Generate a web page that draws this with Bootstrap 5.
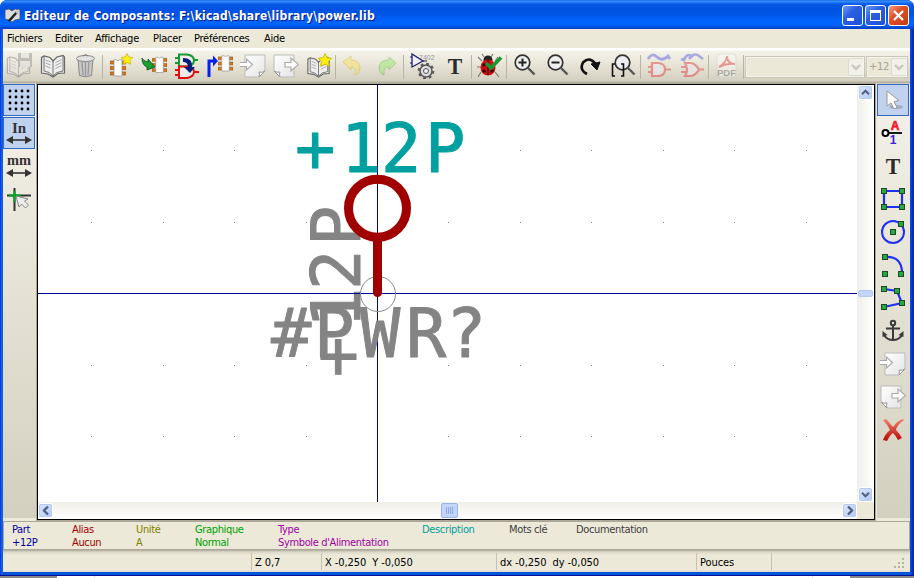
<!DOCTYPE html>
<html lang="fr">
<head>
<meta charset="utf-8">
<title>Editeur de Composants</title>
<link href="https://cdn.jsdelivr.net/npm/bootstrap@5.3.0/dist/css/bootstrap.min.css" rel="stylesheet">
<style>
body{width:914px;height:578px;overflow:hidden;background:#fff;font:11px/13px "DejaVu Sans Condensed","DejaVu Sans",sans-serif;letter-spacing:-.25px;color:#000}
svg{display:block;flex:none}
.win{height:576px;padding:0 4px 4px 3px;background:linear-gradient(90deg,#0831d9 0,#166aee 2px,#0855dd 3px,#0855dd 910px,#0045e0 911px,#001ea0 914px);border-radius:7px 7px 0 0;border-bottom:1px solid #00138c}
.titlebar{height:29px;margin:0 -4px 0 -3px;padding:2px 5px 0 5px;border-radius:7px 7px 0 0;background:linear-gradient(#0a5bd8 0,#3b94ff 1px,#2a80f5 2px,#0a5be6 4px,#0053e1 8px,#0055e5 14px,#0062fa 20px,#0066ff 25px,#0050d8 27px,#003dc8 29px)}
.caption{font:bold 12px/18px "DejaVu Sans Condensed","DejaVu Sans",sans-serif;letter-spacing:.23px;color:#fff;text-shadow:1px 1px 0 #0a1883}
.cap-btn{width:21px;height:21px;border:1px solid #fff;border-radius:3px;background:linear-gradient(135deg,#6f9cf5,#2a5fe0 40%,#1f4fd8)}
.cap-close{background:linear-gradient(135deg,#f0a088,#e0502a 40%,#c43a12)}
.menus{height:19px;background:#ece9d8;padding:3px 0 0 4px}
.tools{height:36px;background:linear-gradient(#fff 0,#fff 2px,#f5f3ea 3px,#e8e5d8 16px,#d4d0c0 33px,#b4b09f 34px,#b4b09f 35px,#ece9d8 36px)}
.tool{width:33px;height:32px;display:flex;align-items:center;justify-content:center;flex:none}
.sep{width:2px;height:24px;border-left:1px solid #b8b4a4;flex:none;margin-top:1px}
.off{opacity:.38}
.combo{height:22px;border:1px solid #c9c7ba;outline:1px solid #f6f4ea;outline-offset:-2px;background:#ebe8d8;color:#a5a290;margin-top:1px;overflow:hidden}
.combo-b{width:16px;height:18px;border-radius:2px;border:1px solid #dddbcf;background:#f2f1e9;flex:none}
.main{height:437px;background:#ece9d8}
.side{background:linear-gradient(#f4f2e9,#d4d0c0);height:434px}
.side-l{width:33px}.side-r{width:33px}
.side .tool{width:32px;height:32px;margin-bottom:1px}
.side .sel{background:#c1d2ee;border:1px solid #316ac5}
.frame{width:838px;height:436px;border:1px solid #000;outline:1px solid #aca899;margin:0 2px 0 1px;background:#fff}
.vsb{width:17px;background:linear-gradient(90deg,#f0efe8,#fff)}
.hsb{height:17px;background:linear-gradient(#f0efe8,#fff)}
.sb{width:15px;height:15px;flex:none;border:1px solid #fff;outline:1px solid #b9cbf0;outline-offset:-2px;border-radius:3px;background:linear-gradient(135deg,#dbe6fe,#b4c8f8)}
.thumb-h{width:17px;height:15px;border:1px solid #98b4e8;border-radius:2px;background:#c4d5fc}
.thumb-v{width:15px;height:7px;border:1px solid #b4c8f0;border-radius:2px;background:#c4d5fc}
.msg{height:29px;background:#ece9d8;border:1px solid #aca899;padding:1px 0 0 8px;letter-spacing:-.35px}
.status{height:22px;background:linear-gradient(#aca899 0,#dcd8c8 2px,#ece9d8 5px,#ece9d8 20px,#ddd9c8);letter-spacing:-.08px}
.pane{height:17px;margin-top:3px;padding:3px 0 0 3px;border-left:1px solid #c5c2b2;white-space:pre}
.under{height:2px;background:linear-gradient(90deg,#888 57px,#fff 57px,#fff 94px,#bbb 94px,#fff 95px,#fff 812px,#bbb 812px,#fff 813px,#fff 850px,#888 850px)}
.w-a{width:60px}.w-b{width:64px}.w-c{width:59px}.w-d{width:83px}.w-e{width:144px}.w-f{width:87px}.w-g{width:67px}
.m1{width:48px}.m2{width:40px}.m3{width:58px}.m4{width:41px}.m5{width:70px}
.p0{width:248px;border:0}.p1{width:70px}.p2{width:175px}.p3{width:200px}.p4{width:75px}.p5{width:122px}
.stroke-font{font-family:"DejaVu Sans Mono",monospace;font-size:67px;letter-spacing:0;stroke-width:1px;stroke-linejoin:round}
.serif{font-family:"Liberation Serif",serif;font-weight:bold;letter-spacing:0}
.sans{font-family:"Liberation Sans",sans-serif;letter-spacing:0}
</style>
<script src="https://cdn.jsdelivr.net/npm/bootstrap@5.3.0/dist/js/bootstrap.bundle.min.js"></script>
</head>
<body>
<svg width="0" height="0" class="position-absolute">
<defs>
<linearGradient id="pg" x1="0" y1="0" x2="1" y2="1"><stop offset="0" stop-color="#fff"/><stop offset="1" stop-color="#e4e4e4"/></linearGradient>
<linearGradient id="rg" x1="0" y1="0" x2="0" y2="1"><stop offset="0" stop-color="#f0806c"/><stop offset="1" stop-color="#b80808"/></linearGradient>
<symbol id="book" viewBox="0 0 26 26"><path d="M1.500 4.500 4 3 10 4.500 13 8 17 4 23 2.500 24.500 4V20L18 20.500 13 24 8 21 1.500 20z" fill="#eee" stroke="#666" stroke-width="1.200"/><path d="M13 8v15M4 3v15l5 1.500 4 3.500 4-3.500 6-1.500V3" fill="none" stroke="#666" stroke-width=".9"/><path d="M5.500 7l5 2M5.500 10l5 2M5.500 13l5 2M21.500 6.500l-6 3M21.500 9.500l-6 3M21.500 12.500l-6 3" stroke="#aaa"/></symbol>
<symbol id="star" viewBox="0 0 12 12"><path d="M6 .5 7.800 4 11.700 4.500 9 7.300 9.700 11.300 6 9.500 2.200 11.300 3 7.300 .3 4.500 4.200 4z" fill="#ffee10" stroke="#c9b400" stroke-width=".7"/></symbol>
<symbol id="chip" viewBox="0 0 16 18"><path d="M0 2h4v3H0zM0 7.500h4v3H0zM0 13h4v3H0zM12 2h4v3h-4zM12 7.500h4v3h-4zM12 13h4v3h-4z" fill="#e07818" stroke="#8a4a10" stroke-width=".6"/><path d="M4 .8h2.500Q8 3 9.500.8H12V17H4z" fill="#fff" stroke="#999" stroke-width=".8"/></symbol>
<symbol id="import" viewBox="0 0 26 26"><path d="M5 2h20v16l-6 6H5z" fill="url(#pg)" stroke="#bbb"/><path d="M25 18l-6 6q1-3 0-5 3 1 6-1z" fill="#fff" stroke="#999"/><path d="M0 9.500h6.500V6l6 5.500-6 5.500v-3.500H0" fill="#fff" stroke="#aaa" stroke-width="1.200"/></symbol>
<symbol id="export" viewBox="0 0 26 26"><path d="M1 2h20v22H7l-6-6z" fill="url(#pg)" stroke="#bbb"/><path d="M1 18l6 6q-1-3 0-5-3 1-6-1z" fill="#fff" stroke="#999"/><path d="M12 9.500h6V5l7.500 6.500L18 18v-4h-6z" fill="#fff" stroke="#aaa" stroke-width="1.200"/></symbol>
<symbol id="bigt" viewBox="0 0 26 26"><text x="13" y="21" text-anchor="middle" font-size="24" textLength="14.500" lengthAdjust="spacingAndGlyphs" class="serif" fill="#2a2a2a">T</text></symbol>
<symbol id="lens" viewBox="0 0 26 26"><circle cx="10.500" cy="9.500" r="7.300" fill="#eee" stroke="#333" stroke-width="1.700"/><path d="M15.500 14.500l7 7" stroke="#555" stroke-width="2.400"/></symbol>
<symbol id="gate" viewBox="0 0 26 26"><path d="M2 6Q6-1 11 4t11-1l2 3" fill="none" stroke="#3a3ae0" stroke-width="2.800"/><path d="M2 14h4M2 19h4M19 16.500h6" stroke="#e01818" stroke-width="2"/><path d="M6 10h7q6 1 6 6.500T13 23H6z" fill="#eeeeff" stroke="#e01818" stroke-width="2.200"/></symbol>
<symbol id="gate2" viewBox="0 0 26 26"><path d="M2 6l3 1Q8-1 14 4M10 6Q15-1 20 3l4 3" fill="none" stroke="#3a3ae0" stroke-width="2.600"/><path d="M2 14h5M2 19h5M20 16.500h5" stroke="#e01818" stroke-width="2"/><path d="M6 10h6q5 1 8 6.500Q17 22 12 23H6q4-6 0-13z" fill="#eeeeff" stroke="#e01818" stroke-width="2.200"/></symbol>
<symbol id="arrow" viewBox="0 0 26 26"><ellipse cx="16" cy="20" rx="7" ry="2" fill="#8a93a5" opacity=".6"/><path d="M7 4v15l4-3 3 6 3-1.500-3-6 5-1z" fill="#fff" stroke="#999" stroke-width="1"/></symbol>
<symbol id="dim" viewBox="0 0 26 8"><path d="M3 4h20" stroke="#333" stroke-width="1.600"/><path d="M0 4l7-4v8zM26 4l-7-4v8z" fill="#333"/></symbol>
<symbol id="knot" viewBox="0 0 6 6"><rect x=".5" y=".5" width="5" height="5" fill="#28a745" stroke="#1c4a20"/></symbol>
<symbol id="chev" viewBox="0 0 10 8"><path d="M1 2l4 4 4-4" fill="none" stroke="currentColor" stroke-width="2.300"/></symbol>
</defs>
</svg>
<div class="win">
<div class="titlebar d-flex align-items-center">
<svg width="15" height="15" viewBox="0 0 15 15"><path d="M0 2l4-1 3 2 3-2 5 1v9l-5 1-3 2-3-2-4-1z" fill="#ddd" stroke="#555" stroke-width=".8"/><path d="M4 13l8-9" stroke="#222" stroke-width="2.600"/><path d="M11 5l3-3" stroke="#ccc" stroke-width="2"/></svg>
<span class="caption ms-1 flex-grow-1">Editeur de Composants: F:\kicad\share\library\power.lib</span>
<div class="d-flex" style="gap:2px">
<div class="cap-btn"><svg width="19" height="19"><path d="M4 12h7v3H4z" fill="#fff"/></svg></div>
<div class="cap-btn"><svg width="19" height="19"><path d="M4 4h11v11H4zM5 7v7h9V7z" fill="#fff" fill-rule="evenodd"/></svg></div>
<div class="cap-btn cap-close"><svg width="19" height="19"><path d="M5 5l9 9M14 5l-9 9" stroke="#fff" stroke-width="2.300"/></svg></div>
</div>
</div>
<div class="menus d-flex"><span class="m1">Fichiers</span><span class="m2">Editer</span><span class="m3">Affichage</span><span class="m4">Placer</span><span class="m5">Préférences</span><span>Aide</span></div>
<div class="tools d-flex align-items-center">
<div class="tool off"><svg width="28" height="28" viewBox="0 0 28 28"><use href="#book" y="2" width="25" height="25"/><path d="M12 1h14v14H12z" fill="#777"/><path d="M15 1h8v5h-8zM14 9h10v6H14z" fill="#ddd"/></svg></div>
<div class="tool"><svg width="26" height="26"><use href="#book"/></svg></div>
<div class="tool"><svg width="26" height="26"><path d="M5 6l1.500 16.500q6 2.500 12 0L20 6z" fill="#c8c8c8" stroke="#888"/><path d="M9 9l1 13M12.500 9v14M16 9l-1 13" stroke="#999" stroke-width="1.300"/><ellipse cx="12.500" cy="5.500" rx="9" ry="3" fill="#e4e4e4" stroke="#888"/><path d="M10 3q2.500-3 5 0" fill="none" stroke="#777"/></svg></div>
<div class="sep"></div>
<div class="tool"><svg width="26" height="26"><use href="#chip" x="2" y="6" width="16" height="18"/><use href="#star" x="13" y="0" width="12" height="12"/></svg></div>
<div class="tool"><svg width="26" height="26"><use href="#chip" x="11" y="3" width="15" height="18"/><path d="M1 5q1 3 6 4V6l7 8-8 3v-3Q1 12 1 5z" fill="#18a030" stroke="#064a10" stroke-width=".8"/></svg></div>
<div class="tool"><svg width="26" height="26"><path d="M1 5h5M1 10h5M19 7h5" stroke="#189830" stroke-width="1.800"/><path d="M5 1.500h8q7 1 7 6t-7 6H5z" fill="#eee" stroke="#189830" stroke-width="2"/><path d="M1 17h5M1 22h5M19 19h6" stroke="#e01010" stroke-width="1.800"/><path d="M5 13.500h8q7 1 7 5.500t-7 6H5z" fill="#eee" stroke="#e01010" stroke-width="2"/><path d="M9 5q10 0 9 9h3l-5 6-6-6h4q0-5-5-5z" fill="#001c80"/></svg></div>
<div class="tool"><svg width="28" height="28"><use href="#chip" x="12" y="3" width="15" height="17"/><path d="M3 25V9h6" fill="none" stroke="#0820e8" stroke-width="3"/><path d="M7 3.500l5 5.500-5 5.500z" fill="#0820e8"/></svg></div>
<div class="tool"><svg width="26" height="26"><use href="#import"/></svg></div>
<div class="tool"><svg width="26" height="26"><use href="#export"/></svg></div>
<div class="tool"><svg width="26" height="26"><use href="#book" y="2" width="25" height="24"/><use href="#star" x="12" width="14" height="14"/></svg></div>
<div class="sep"></div>
<div class="tool off"><svg width="26" height="26"><path d="M2 9l8-6v4q9 0 9 8-1 6-5 7 2-8-4-8v3z" fill="#ffe040" stroke="#d8b000"/></svg></div>
<div class="tool off"><svg width="26" height="26"><path d="M22 10l-7-6v3Q5 7 5 15q1 6 5 7-1-8 5-8v3z" fill="#80e850" stroke="#48a828"/></svg></div>
<div class="sep"></div>
<div class="tool"><svg width="26" height="26"><text x="10" y="7" font-size="7" class="sans" fill="#999">7402</text><path d="M1 4h4M1 10h4M14 8h4" stroke="#223"/><path d="M3 1v13l11-6z" fill="#eef" stroke="#202070" stroke-width="1.300"/><circle cx="17" cy="18" r="6" fill="#ddd" stroke="#555" stroke-width="1.500"/><circle cx="17" cy="18" r="7.300" fill="none" stroke="#555" stroke-width="2" stroke-dasharray="2.800 2.930"/><circle cx="17" cy="18" r="2.500" fill="#eee" stroke="#555"/></svg></div>
<div class="tool"><svg width="26" height="26"><use href="#bigt"/></svg></div>
<div class="sep"></div>
<div class="tool"><svg width="26" height="26"><path d="M5 8L1 4M18 8l3-4M4 14H0M4 19l-3 5M18 19l4 5M7 4L5 1M14 4l2-3" stroke="#777" stroke-width="1.100"/><circle cx="11" cy="7" r="4.500" fill="#222"/><ellipse cx="11" cy="14.500" rx="7.500" ry="8" fill="#d01010"/><path d="M11 7v15" stroke="#400" stroke-width="1.300"/><g fill="#300"><circle cx="7" cy="12" r="1.700"/><circle cx="7" cy="18" r="1.700"/><circle cx="15" cy="18" r="1.700"/></g><path d="M9 10l5 5L24 4.500" fill="none" stroke="#189830" stroke-width="3.500"/></svg></div>
<div class="sep"></div>
<div class="tool"><svg width="26" height="26"><use href="#lens"/><path d="M6.500 9.500h8M10.500 5.500v8" stroke="#222" stroke-width="2"/></svg></div>
<div class="tool"><svg width="26" height="26"><use href="#lens"/><path d="M6.500 9.500h8" stroke="#222" stroke-width="2"/></svg></div>
<div class="tool"><svg width="26" height="26"><path d="M9 21Q1 17 5 9.500q7-7 13 2.500" fill="none" stroke="#111" stroke-width="2.600"/><path d="M13 11l9-2-3 8z" fill="#111" stroke="#111"/></svg></div>
<div class="tool"><svg width="26" height="26"><use href="#lens" x="1"/><path d="M4 11H1.500v12H4M10 11h2.500v12H10" fill="none" stroke="#111" stroke-width="1.600"/></svg></div>
<div class="sep"></div>
<div class="tool off"><svg width="26" height="26"><use href="#gate"/></svg></div>
<div class="tool off"><svg width="26" height="26"><use href="#gate2"/></svg></div>
<div class="sep"></div>
<div class="tool off"><svg width="24" height="26"><rect x="2" y="1" width="19" height="23" rx="3" fill="#fff" stroke="#ccc"/><path d="M4 14Q12 9 12 3q0 8 8 8-8-1-16 3z" fill="none" stroke="#e02020" stroke-width="2"/><text x="11.500" y="23" text-anchor="middle" font-size="9.500" font-weight="bold" class="sans" fill="#555">PDF</text></svg></div>
<div class="sep"></div>
<div class="combo d-flex justify-content-end align-items-center" style="width:120px;margin-right:1px"><div class="combo-b d-flex align-items-center justify-content-center"><svg width="10" height="8" color="#c9c7ba"><use href="#chev"/></svg></div></div>
<div class="combo d-flex justify-content-between align-items-center" style="width:42px;padding-left:2px"><span>+12</span><div class="combo-b d-flex align-items-center justify-content-center"><svg width="10" height="8" color="#c9c7ba"><use href="#chev"/></svg></div></div>
</div>
<div class="main d-flex">
<div class="side side-l">
<div class="tool sel"><svg width="24" height="24"><g stroke="#000" stroke-width="2.800" stroke-linecap="round" stroke-dasharray="0 6"><path d="M3 3h19M3 9h19M3 15h19M3 21h19"/></g></svg></div>
<div class="tool sel"><svg width="26" height="28"><text x="13" y="14" text-anchor="middle" font-size="15" class="serif" fill="#333">In</text><use href="#dim" y="17" width="26" height="8"/></svg></div>
<div class="tool"><svg width="26" height="28"><text x="13" y="13" text-anchor="middle" font-size="15" textLength="24" lengthAdjust="spacingAndGlyphs" class="serif" fill="#333">mm</text><use href="#dim" y="17" width="26" height="8"/></svg></div>
<div class="tool"><svg width="28" height="28"><path d="M2 10.500h24M9.500 3v23" stroke="#333" stroke-width="2"/><path d="M4 10.500h12M9.500 6v11" stroke="#00a820" stroke-width="2.200"/><path d="M11 11l3 11 2.500-3 4 4 3-3-4-4 3.500-2z" fill="#eee" stroke="#888"/></svg></div>
</div>
<div class="frame d-flex flex-column">
<div class="d-flex">
<svg width="819" height="417" viewBox="38 85 819 417">
<g fill="#848484" stroke="#848484">
<text class="stroke-font" transform="translate(360 0) rotate(-90)" y="0" x="-377 -328 -290 -246">+12P</text>
</g>
<path d="M38 293.500h820M377.500 85v418" stroke="#0000a0" shape-rendering="crispEdges"/>
<g fill="#848484" stroke="#848484">
<text class="stroke-font" y="357" x="271 314 360 406 446">#PWR?</text>
</g>
<text class="stroke-font" fill="#00a0a0" stroke="#00a0a0" y="171.500" x="295 341 381 425">+12P</text>
<g stroke="#888" stroke-dasharray="1 70.500" shape-rendering="crispEdges"><path d="M91 150.500h200M448 150.500h400M91 222.500h250M448 222.500h400M91 365.500h250M448 365.500h400M91 436.500h250M448 436.500h400"/></g>
<circle cx="378" cy="294" r="17.500" fill="none" stroke="#888"/>
<circle cx="377.500" cy="208.300" r="29" fill="none" stroke="#a00000" stroke-width="9"/>
<path d="M377.500 240v52.500" stroke="#a00000" stroke-width="9" stroke-linecap="round"/>
</svg>
<div class="vsb d-flex flex-column justify-content-between align-items-center">
<div class="sb d-flex align-items-center justify-content-center"><svg width="9" height="7" color="#4d6185"><g transform="rotate(180 4.500 3.500)"><use href="#chev"/></g></svg></div>
<div class="thumb-v"></div>
<div class="sb d-flex align-items-center justify-content-center"><svg width="9" height="7" color="#4d6185"><use href="#chev"/></svg></div>
</div>
</div>
<div class="d-flex">
<div class="hsb d-flex justify-content-between align-items-center" style="width:819px">
<div class="sb d-flex align-items-center justify-content-center"><svg width="8" height="9"><path d="M6 0.500l-4 4 4 4" fill="none" stroke="#4d6185" stroke-width="2.300"/></svg></div>
<div class="thumb-h d-flex align-items-center justify-content-center ms-1"><svg width="9" height="7"><path d="M1.500 0v7M3.500 0v7M5.500 0v7M7.500 0v7" stroke="#8ca8e0"/></svg></div>
<div class="sb d-flex align-items-center justify-content-center"><svg width="8" height="9"><path d="M2 .5l4 4-4 4" fill="none" stroke="#4d6185" stroke-width="2.300"/></svg></div>
</div>
<div style="width:17px;background:#ece9d8"></div>
</div>
</div>
<div class="side side-r">
<div class="tool sel"><svg width="26" height="26"><use href="#arrow"/></svg></div>
<div class="tool"><svg width="26" height="28"><circle cx="5.500" cy="14" r="3" fill="#fff" stroke="#000" stroke-width="2"/><path d="M9 14h13" stroke="#000" stroke-width="1.800"/><text x="15" y="11" text-anchor="middle" font-size="12" font-weight="bold" class="sans" fill="#f01830" stroke="#f01830" stroke-width=".6">A</text><text x="13" y="25" text-anchor="middle" font-size="12" font-weight="bold" class="sans" fill="#4020e0">1</text></svg></div>
<div class="tool"><svg width="26" height="26"><use href="#bigt"/></svg></div>
<div class="tool"><svg width="26" height="26"><path d="M4 5h18v16H4z" fill="none" stroke="#2030f0" stroke-width="2.200"/><use href="#knot" x="1" y="2" width="6" height="6"/><use href="#knot" x="19" y="2" width="6" height="6"/><use href="#knot" x="1" y="18" width="6" height="6"/><use href="#knot" x="19" y="18" width="6" height="6"/></svg></div>
<div class="tool"><svg width="26" height="26"><circle cx="13" cy="13" r="11" fill="none" stroke="#2030f0" stroke-width="2"/><use href="#knot" x="10" y="10" width="6" height="6"/><use href="#knot" x="18" y="2" width="6" height="6"/></svg></div>
<div class="tool"><svg width="26" height="26"><path d="M5 5q17-1 17 16" fill="none" stroke="#2030f0" stroke-width="2.200"/><use href="#knot" x="2" y="2" width="6" height="6"/><use href="#knot" x="2" y="19" width="6" height="6"/><use href="#knot" x="18" y="19" width="6" height="6"/></svg></div>
<div class="tool"><svg width="26" height="26"><path d="M4 4l13 2 5 12L4 22" fill="none" stroke="#2030f0" stroke-width="2.200"/><use href="#knot" x="1" y="1" width="6" height="6"/><use href="#knot" x="14" y="3" width="6" height="6"/><use href="#knot" x="19" y="15" width="6" height="6"/><use href="#knot" x="1" y="19" width="6" height="6"/></svg></div>
<div class="tool"><svg width="26" height="26"><g fill="none" stroke="#3a3a3a" stroke-width="2"><circle cx="13" cy="5" r="2.200"/><path d="M13 8v14M6 10.500h14M4 17q3 5 9 5t9-5"/></g><path d="M2.500 19V13l5 4zM23.500 19v-6l-5 4z" fill="#3a3a3a"/></svg></div>
<div class="tool"><svg width="26" height="26"><use href="#import"/></svg></div>
<div class="tool"><svg width="26" height="26"><use href="#export"/></svg></div>
<div class="tool"><svg width="26" height="26"><path d="M3 3q4-2 5 1l5 6Q17 4 23 2l1 1q-7 5-8 10 4 4 6 8l-4 2q-2-4-5-7-3 2-6 8l-4-1q2-6 7-10Q7 7 3 3z" fill="url(#rg)"/></svg></div>
</div>
</div>
<div class="msg d-flex">
<div class="w-a" style="color:#0000a0">Part<br>+12P</div>
<div class="w-b" style="color:#a00000">Alias<br>Aucun</div>
<div class="w-c" style="color:#808000">Unité<br>A</div>
<div class="w-d" style="color:#00a000">Graphique<br>Normal</div>
<div class="w-e text-nowrap" style="color:#a000a0">Type<br>Symbole d'Alimentation</div>
<div class="w-f" style="color:#00a0a0">Description</div>
<div class="w-g" style="color:#404040">Mots clé</div>
<div style="color:#404040">Documentation</div>
</div>
<div class="status d-flex">
<div class="pane p0"></div><div class="pane p1">Z 0,7</div><div class="pane p2">X -0,250  Y -0,050</div><div class="pane p3">dx -0,250  dy -0,050</div><div class="pane p4">Pouces</div><div class="pane p5"></div>
<svg width="12" height="20"><path d="M9 8h2v2H9zM5 12h2v2H5zM9 12h2v2H9zM1 16h2v2H1zM5 16h2v2H5zM9 16h2v2H9z" fill="#b8b4a2"/></svg>
</div>
</div>
<div class="under"></div>
</body>
</html>
